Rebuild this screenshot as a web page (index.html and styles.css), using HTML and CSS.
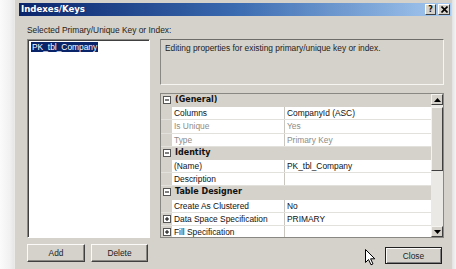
FILE: index.html
```html
<!DOCTYPE html>
<html>
<head>
<meta charset="utf-8">
<link rel="stylesheet" href="styles.css">
</head>
<body>
<div class="screen">
  <div class="outside"></div>
  <div class="dialog">
    <div class="titlebar">
      <span class="title">Indexes/Keys</span>
      <div class="tbtns">
        <span class="tbtn help">?</span>
        <span class="tbtn close-x"><svg width="7" height="7" viewBox="0 0 7 7"><path d="M0.5 0.5 L6.5 6.5 M6.5 0.5 L0.5 6.5" stroke="#000" stroke-width="1.6"/></svg></span>
      </div>
    </div>
    <div class="content">
      <div class="label">Selected Primary/Unique Key or Index:</div>
      <div class="panes">
        <div class="listbox"><span class="sel">PK_tbl_Company</span></div>
        <div class="right">
          <div class="desc">Editing properties for existing primary/unique key or index.</div>
          <div class="pgrid">
            <div class="rows">
              <div class="row cat"><span class="mg"><svg class="tog" width="8" height="8" viewBox="0 0 8 8"><rect x="0.5" y="0.5" width="7" height="7" fill="#fff" stroke="#555"/><path d="M2 4 H6" stroke="#000"/></svg></span><span class="cn">(General)</span></div>
              <div class="row"><span class="mg"></span><span class="nm">Columns</span><span class="vl">CompanyId (ASC)</span></div>
              <div class="row ro"><span class="mg"></span><span class="nm">Is Unique</span><span class="vl">Yes</span></div>
              <div class="row ro"><span class="mg"></span><span class="nm">Type</span><span class="vl">Primary Key</span></div>
              <div class="row cat"><span class="mg"><svg class="tog" width="8" height="8" viewBox="0 0 8 8"><rect x="0.5" y="0.5" width="7" height="7" fill="#fff" stroke="#555"/><path d="M2 4 H6" stroke="#000"/></svg></span><span class="cn">Identity</span></div>
              <div class="row"><span class="mg"></span><span class="nm">(Name)</span><span class="vl">PK_tbl_Company</span></div>
              <div class="row"><span class="mg"></span><span class="nm">Description</span><span class="vl"></span></div>
              <div class="row cat"><span class="mg"><svg class="tog" width="8" height="8" viewBox="0 0 8 8"><rect x="0.5" y="0.5" width="7" height="7" fill="#fff" stroke="#555"/><path d="M2 4 H6" stroke="#000"/></svg></span><span class="cn">Table Designer</span></div>
              <div class="row"><span class="mg"></span><span class="nm">Create As Clustered</span><span class="vl">No</span></div>
              <div class="row"><span class="mg"><svg class="tog" width="8" height="8" viewBox="0 0 8 8"><rect x="0.5" y="0.5" width="7" height="7" fill="#fff" stroke="#555"/><path d="M2 4 H6 M4 2 V6" stroke="#000"/></svg></span><span class="nm">Data Space Specification</span><span class="vl">PRIMARY</span></div>
              <div class="row"><span class="mg"><svg class="tog" width="8" height="8" viewBox="0 0 8 8"><rect x="0.5" y="0.5" width="7" height="7" fill="#fff" stroke="#555"/><path d="M2 4 H6 M4 2 V6" stroke="#000"/></svg></span><span class="nm">Fill Specification</span><span class="vl"></span></div>
            </div>
            <div class="vscroll">
              <div class="sbtn"><svg width="7" height="4" viewBox="0 0 7 4"><path d="M3.5 0 L7 4 H0 Z" fill="#000"/></svg></div>
              <div class="thumb"></div>
              <div class="track"></div>
              <div class="sbtn"><svg width="7" height="4" viewBox="0 0 7 4"><path d="M0 0 H7 L3.5 4 Z" fill="#000"/></svg></div>
            </div>
          </div>
        </div>
      </div>
      <div class="footer">
        <span class="btn add">Add</span>
        <span class="btn del">Delete</span>
        <span class="btn close">Close</span>
      </div>
    </div>
  </div>
  <div class="outside-r"></div>
  <svg class="cursor" width="11" height="17" viewBox="0 0 11 17"><path d="M0.5 0.5 V13.5 L3.5 10.5 L6 15.8 L8 14.9 L5.6 9.8 H9.8 Z" fill="#fff" stroke="#000" stroke-width="1" stroke-linejoin="round"/></svg>
</div>
</body>
</html>
```

FILE: styles.css
```css
* { box-sizing: border-box; }
html, body { margin: 0; padding: 0; }
body {
  width: 456px;
  height: 269px;
  overflow: hidden;
  font-family: "Liberation Sans", Arial, sans-serif;
  font-size: 8.4px;
  color: #111;
}
.screen {
  position: relative;
  display: flex;
  width: 456px;
  height: 269px;
}
.outside {
  width: 14px;
  background: linear-gradient(to right, #fbfbfb, #f1f1f1 70%, #e6e6e6);
}
.outside-r {
  width: 4px;
  background: linear-gradient(to right, #e2e2e2, #f4f4f4);
}
.dialog {
  width: 438px;
  background: #d5d2cb;
  border-left: 1px solid #ebeae6;
  padding-top: 3px;
  display: flex;
  flex-direction: column;
}
.titlebar {
  height: 13px;
  margin: 0 1px 0 4px;
  background: linear-gradient(to right, #0a246a, #3a6ab0 50%, #a6caf0);
  display: flex;
  align-items: center;
  justify-content: space-between;
  padding: 0 1px 0 2px;
}
.title {
  font-family: "DejaVu Sans", sans-serif;
  font-weight: bold;
  font-size: 8.6px;
  color: #fff;
  line-height: 13px;
}
.tbtns { display: flex; gap: 2px; }
.tbtn {
  width: 11px;
  height: 11px;
  background: #d5d2cb;
  border: 1px solid;
  border-color: #fff #404040 #404040 #fff;
  display: flex;
  align-items: center;
  justify-content: center;
  font-family: "DejaVu Sans", sans-serif;
  font-weight: bold;
  font-size: 8px;
  line-height: 9px;
}
.close-x { width: 12px; }
.content {
  padding: 0 8px 0 12px;
  display: flex;
  flex-direction: column;
}
.label {
  margin-top: 9px;
  height: 10px;
  line-height: 10px;
  color: #222;
}
.panes {
  margin-top: 4px;
  display: flex;
  gap: 10px;
  height: 199px;
}
.listbox {
  width: 123px;
  height: 199px;
  background: #fff;
  border: 1px solid;
  border-color: #8a8883 #fff #fff #8a8883;
  box-shadow: inset 1px 1px 0 #404040;
  padding: 2px 0 0 3px;
}
.sel {
  display: inline-block;
  background: #0a246a;
  color: #fff;
  height: 10px;
  line-height: 10px;
  padding: 0 1px;
}
.right {
  width: 284px;
  display: flex;
  flex-direction: column;
  gap: 8px;
}
.desc {
  height: 46px;
  border: 1px solid;
  border-color: #6e6c68 #f6f5f2 #f6f5f2 #8a8883;
  padding: 3px 4px;
  line-height: 10px;
  color: #222;
}
.pgrid {
  height: 145px;
  border: 1px solid #8a8883;
  display: flex;
  background: #d5d2cb;
  overflow: hidden;
}
.rows {
  width: 270px;
  display: flex;
  flex-direction: column;
  flex: none;
}
.row {
  height: 13.2px;
  flex: none;
  display: flex;
  border-bottom: 1px solid #e3e1dc;
  line-height: 12px;
  white-space: nowrap;
}
.mg {
  width: 11px;
  flex: none;
  background: #d5d2cb;
  display: flex;
  align-items: center;
  padding-left: 2px;
}
.nm {
  width: 113px;
  flex: none;
  background: #fff;
  border-right: 1px solid #c9c6bf;
  padding-left: 2px;
  overflow: hidden;
}
.vl {
  flex: 1;
  background: #fff;
  padding-left: 2px;
}
.ro .nm, .ro .vl { color: #8e8c88; }
.cat {
  background: #d5d2cb;
  border-bottom: 1px solid #d5d2cb;
}
.cn {
  font-family: "DejaVu Sans", sans-serif;
  font-weight: bold;
  font-size: 8px;
  padding-left: 3px;
}
.tog { display: block; }
.vscroll {
  width: 12px;
  display: flex;
  flex-direction: column;
  background: #ebe9e5;
}
.sbtn {
  height: 11px;
  flex: none;
  background: #d5d2cb;
  border: 1px solid;
  border-color: #f4f3f0 #404040 #404040 #f4f3f0;
  display: flex;
  align-items: center;
  justify-content: center;
}
.thumb {
  margin-top: 2px;
  height: 64px;
  flex: none;
  background: #d5d2cb;
  border: 1px solid;
  border-color: #f4f3f0 #404040 #404040 #f4f3f0;
}
.track { flex: 1; }
.footer {
  margin-top: 6px;
  display: flex;
  align-items: flex-start;
}
.btn {
  height: 18px;
  background: #d5d2cb;
  border: 1px solid;
  border-color: #fbfaf8 #404040 #404040 #fbfaf8;
  box-shadow: inset -1px -1px 0 #8a8883;
  display: flex;
  align-items: center;
  justify-content: center;
  color: #222;
}
.add { width: 58px; }
.del { width: 57px; margin-left: 6px; }
.close {
  width: 57px;
  height: 17px;
  margin-left: auto;
  margin-right: 2px;
  margin-top: 3px;
  border: 1px solid #202020;
  box-shadow: inset 1px 1px 0 #fbfaf8, inset -1px -1px 0 #808080;
}
.cursor {
  position: absolute;
  left: 365px;
  top: 249px;
}
```
